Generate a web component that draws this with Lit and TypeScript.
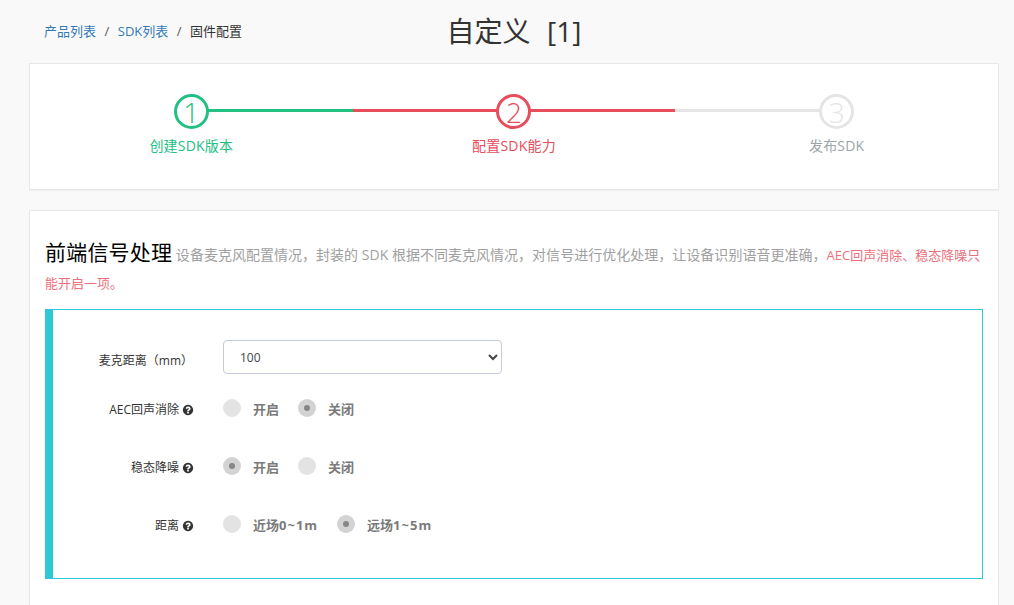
import { LitElement, html, css, svg } from "lit";
import { customElement } from "lit/decorators.js";

const helpIcon = html`<svg class="help" viewBox="0 0 1792 1792" aria-hidden="true">${svg`<path fill="currentColor" d="M1024 1376v-192q0-14-9-23t-23-9H800q-14 0-23 9t-9 23v192q0 14 9 23t23 9h192q14 0 23-9t9-23zm256-672q0-88-55.500-163T1086 425t-170-41q-243 0-371 213-15 24 8 42l132 100q7 6 19 6 16 0 25-12 53-68 86-92 34-24 86-24 48 0 85.500 26t37.500 59q0 38-20 63t-68 47q-63 28-115.500 86.500T768 1023v36q0 14 9 23t23 9h192q14 0 23-9t9-23q0-19 21.500-49.500T1100 960q32-18 49-28.500t46-35 44.500-48 28-60.500 12.500-84zm384 192q0 209-103 385.500T1281.500 1561 896 1664t-385.500-103T231 1281.500 128 896t103-385.500T510.500 231 896 128t385.500 103T1561 510.500 1664 896z"/>`}</svg>`;

interface Opt { text: string; lat?: string; on: boolean }
interface Row { label: string; opts: Opt[] }

const rows: Row[] = [
  { label: "AEC回声消除", opts: [{ text: "开启", on: false }, { text: "关闭", on: true }] },
  { label: "稳态降噪", opts: [{ text: "开启", on: true }, { text: "关闭", on: false }] },
  { label: "距离", opts: [{ text: "近场", lat: "0~1m", on: false }, { text: "远场", lat: "1~5m", on: true }] },
];

@customElement("app-root")
export class AppRoot extends LitElement {
  static styles = css`
    :host {
      display: block;
      width: 1014px;
      height: 605px;
      overflow: hidden;
      background: #f9f9f9;
      font-family: "Open Sans", "Noto Sans CJK SC", sans-serif;
      color: #333;
      box-sizing: border-box;
      padding: 0 15px 0 29px;
    }
    * { box-sizing: border-box; }
    .top {
      display: grid;
      grid-template-columns: 1fr auto 1fr;
      align-items: start;
      height: 63px;
      width: 970px;
    }
    .crumbs {
      display: flex;
      gap: 7.5px;
      padding: 21px 0 0 15px;
      font-size: 13px;
      line-height: 20px;
    }
    .crumbs a { color: #337ab7; text-decoration: none; }
    .crumbs .sep { color: #555; margin: 0 1px; }
    .title {
      margin: 0;
      padding-top: 11px;
      font-size: 28px;
      line-height: 40px;
      font-weight: 400;
      white-space: pre;
      word-spacing: 1px;
      color: #333;
    }
    .card {
      width: 970px;
      background: #fff;
      border: 1px solid #e7e7e7;
      box-shadow: 0 1px 1px rgba(0, 0, 0, 0.03);
    }
    .steps {
      height: 127px;
      display: grid;
      grid-template-columns: repeat(3, 1fr);
      padding-top: 30px;
      margin-bottom: 20px;
    }
    .step {
      display: flex;
      flex-direction: column;
      align-items: center;
      position: relative;
      font-size: 14px;
      color: var(--c);
    }
    .step.green { --c: #22c083; }
    .step.red { --c: #e84d5b; }
    .step.gray { --c: #e5e5e5; }
    .step.gray .name { color: #9aa5a8; }
    .line {
      position: absolute;
      top: 15px;
      height: 3px;
      width: 50%;
      background: var(--c);
    }
    .line.left { left: 0; }
    .line.right { right: 0; }
    .circle {
      position: relative;
      width: 35px;
      height: 35px;
      border: 3px solid var(--c);
      border-radius: 50%;
      background: #fff;
      display: flex;
      align-items: center;
      justify-content: center;
      font-size: 28px;
      line-height: 1;
      font-weight: 300;
      color: var(--c);
    }
    .name {
      margin-top: 7px;
      line-height: 20px;
      letter-spacing: 0.2px;
    }
    .panel {
      height: 420px;
      padding: 27px 15px 0 15px;
    }
    .head {
      margin: 0;
      font-size: 14px;
      line-height: 28px;
      font-weight: 400;
      color: #a0a0a0;
      letter-spacing: 0.02px;
    }
    .head b {
      font-weight: 400;
      font-size: 21px;
      color: #000;
      letter-spacing: 0.2px;
    }
    .head em { font-style: normal; font-size: 13px; color: #ee6f7c; letter-spacing: 0; }
    .box {
      margin-top: 12px;
      width: 938px;
      height: 270px;
      border: 1px solid #2dcbd8;
      border-left: 8px solid #2fc8d6;
      padding-top: 30px;
    }
    .row {
      display: grid;
      grid-template-columns: 141px 1fr;
      column-gap: 29px;
      height: 58px;
      font-size: 12px;
    }
    .label {
      text-align: right;
      color: #333;
      line-height: 16px;
      display: flex;
      justify-content: flex-end;
      align-items: center;
      gap: 3px;
      height: 16px;
      margin-top: 4px;
    }
    .row.sel .label { margin-top: 13px; margin-right: 1px; gap: 0; }
    .help { width: 12px; height: 12px; color: #333; flex: none; }
    select {
      width: 279px;
      height: 34px;
      border: 1px solid #c3cad8;
      border-radius: 4px;
      background: #fff;
      padding: 0 12px;
      font: inherit;
      font-size: 12px;
      color: #444;
      outline: none;
    }
    .opts { display: flex; }
    .opt {
      display: flex;
      align-items: flex-start;
      margin-right: 19px;
      font-size: 13px;
      font-weight: 700;
      color: #7a7a7a;
      line-height: 16px;
    }
    .radio {
      width: 18px;
      height: 18px;
      border-radius: 50%;
      background: #e3e3e3;
      margin: 1px 12px 0 0;
      display: flex;
      align-items: center;
      justify-content: center;
      flex: none;
    }
    .radio.on { background: #d3d3d3; }
    .radio.on::after {
      content: "";
      width: 6px;
      height: 6px;
      border-radius: 50%;
      background: #868686;
      margin-top: -1px;
    }
    .opt span.t { margin-top: 3px; }
    .lat { letter-spacing: 1px; }
  `;

  private step(cls: string, n: string, name: string, left: boolean, right: boolean) {
    return html`<div class="step ${cls}">
      ${left ? html`<div class="line left"></div>` : ""}
      ${right ? html`<div class="line right"></div>` : ""}
      <div class="circle">${n}</div>
      <div class="name">${name}</div>
    </div>`;
  }

  render() {
    return html`
      <div class="top">
        <nav class="crumbs">
          <a>产品列表</a><span class="sep">/</span><a>SDK列表</a><span class="sep">/</span><span>固件配置</span>
        </nav>
        <h1 class="title">自定义  [1]</h1>
        <div></div>
      </div>
      <div class="card steps">
        ${this.step("green", "1", "创建SDK版本", false, true)}
        ${this.step("red", "2", "配置SDK能力", true, true)}
        ${this.step("gray", "3", "发布SDK", true, false)}
      </div>
      <div class="card panel">
        <h2 class="head"><b>前端信号处理</b> 设备麦克风配置情况，封装的 SDK 根据不同麦克风情况，对信号进行优化处理，让设备识别语音更准确，<em>AEC回声消除、稳态降噪只能开启一项。</em></h2>
        <div class="box">
          <div class="row sel">
            <div class="label">麦克距离（mm）</div>
            <div><select><option>100</option></select></div>
          </div>
          ${rows.map(
            (r) => html`<div class="row">
              <div class="label">${r.label} ${helpIcon}</div>
              <div class="opts">
                ${r.opts.map(
                  (o) => html`<label class="opt"><span class="radio ${o.on ? "on" : ""}"></span><span class="t">${o.text}${o.lat ? html`<span class="lat">${o.lat}</span>` : ""}</span></label>`
                )}
              </div>
            </div>`
          )}
        </div>
      </div>
    `;
  }
}
